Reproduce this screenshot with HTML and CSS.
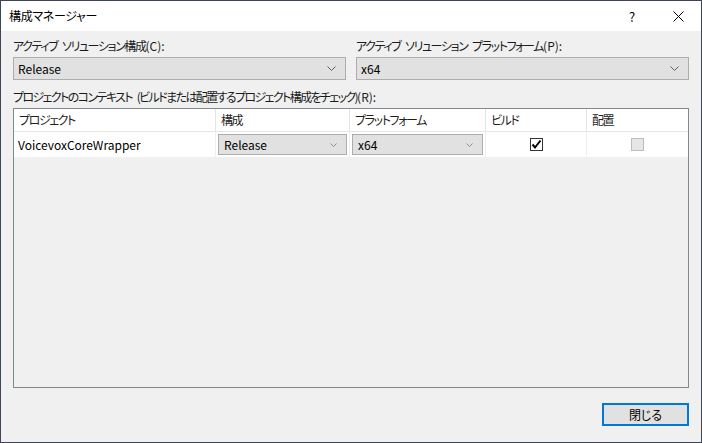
FILE: index.html
```html
<!DOCTYPE html>
<html lang="ja">
<head>
<meta charset="utf-8">
<title>構成マネージャー</title>
<link rel="stylesheet" href="styles.css">
</head>
<body>
<div class="window">
  <div class="titlebar">
    <span class="title">構成マネージャー</span>
    <span class="tb-btns">
      <span class="tb-help">?</span>
      <span class="tb-close"><svg width="11" height="11" viewBox="0 0 11 11"><path d="M0.5 0.5 L10.5 10.5 M10.5 0.5 L0.5 10.5" stroke="#000" stroke-width="1" fill="none"/></svg></span>
    </span>
  </div>
  <div class="content">
    <div class="top-row">
      <div class="field">
        <div class="label"><span class="ja">アクティブ<span class="sp"> </span>ソリューション構成</span>(C):</div>
        <div class="combo"><span>Release</span><svg class="chev" width="9" height="5" viewBox="0 0 9 5"><path d="M0.5 0.5 L4.5 4.5 L8.5 0.5" stroke="#606060" fill="none"/></svg></div>
      </div>
      <div class="field">
        <div class="label"><span class="ja">アクティブ<span class="sp"> </span>ソリューション<span class="sp"> </span>プラットフォーム</span>(P):</div>
        <div class="combo"><span>x64</span><svg class="chev" width="9" height="5" viewBox="0 0 9 5"><path d="M0.5 0.5 L4.5 4.5 L8.5 0.5" stroke="#606060" fill="none"/></svg></div>
      </div>
    </div>
    <div class="label label2"><span class="ja tight">プロジェクトのコンテキスト<span class="sp"> </span>(ビルドまたは配置するプロジェクト構成をチェック)</span>(R):</div>
    <div class="grid">
      <div class="grow head">
        <div class="cell ja">プロジェクト</div>
        <div class="cell ja">構成</div>
        <div class="cell ja">プラットフォーム</div>
        <div class="cell ja">ビルド</div>
        <div class="cell ja">配置</div>
      </div>
      <div class="grow data">
        <div class="cell">VoicevoxCoreWrapper</div>
        <div class="cell cc"><div class="mini"><span>Release</span><svg class="mchev" width="7" height="4" viewBox="0 0 7 4"><path d="M0.5 0.5 L3.5 3.5 L6.5 0.5" stroke="#909090" fill="none"/></svg></div></div>
        <div class="cell cc"><div class="mini"><span>x64</span><svg class="mchev" width="7" height="4" viewBox="0 0 7 4"><path d="M0.5 0.5 L3.5 3.5 L6.5 0.5" stroke="#909090" fill="none"/></svg></div></div>
        <div class="cell center"><span class="chk"><svg width="11" height="11" viewBox="0 0 11 11"><path d="M1.5 5.5 L4 8.5 L9.5 1.5" stroke="#000" stroke-width="2" fill="none"/></svg></span></div>
        <div class="cell center"><span class="chk disabled"></span></div>
      </div>
    </div>
    <div class="footer">
      <div class="btn">閉じる</div>
    </div>
  </div>
</div>
</body>
</html>
```
FILE: styles.css
```css
* { box-sizing: border-box; }
html, body { margin: 0; padding: 0; }
body {
  font-family: "Noto Sans CJK JP", "Noto Sans", sans-serif;
  font-size: 12px;
  font-feature-settings: "palt";
  color: #000;
  background: #f0f0f0;
}
.ja { letter-spacing: -1.4px; }
.ja.tight { letter-spacing: -1.6px; }
.ja .sp { letter-spacing: 2px; }
.window {
  width: 702px;
  height: 443px;
  border: 1px solid #3c4656;
  background: #f0f0f0;
  display: flex;
  flex-direction: column;
}
.titlebar {
  height: 30px;
  background: #fff;
  display: flex;
  align-items: center;
  justify-content: space-between;
  padding-left: 8px;
  flex: none;
}
.title { line-height: 16px; letter-spacing: -0.3px; }
.tb-btns { display: flex; align-items: center; height: 30px; }
.tb-help {
  width: 46px;
  text-align: center;
  font-size: 13px;
}
.tb-close {
  width: 46px;
  height: 30px;
  display: flex;
  align-items: center;
  justify-content: center;
}
.content {
  flex: 1;
  display: flex;
  flex-direction: column;
  padding: 7px 12px 16px 12px;
}
.top-row {
  display: flex;
  gap: 10px;
}
.field { flex: 1; }
.label { line-height: 16px; height: 16px; white-space: nowrap; color: #1a1a1a; }
.combo {
  margin-top: 3px;
  height: 23px;
  border: 1px solid #adadad;
  background: #e1e1e1;
  display: flex;
  align-items: center;
  justify-content: space-between;
  padding: 0 9px 0 4px;
}
.combo span { line-height: 16px; }
.label2 { margin-top: 9px; }
.grid {
  margin-top: 3px;
  height: 280px;
  border: 1px solid #828790;
  background: #f0f0f0;
  display: flex;
  flex-direction: column;
}
.grow {
  display: grid;
  grid-template-columns: 202px 134px 136px 101px 1fr;
}
.head {
  height: 23px;
  background: #fff;
  border-bottom: 1px solid #e5e5e5;
}
.head .cell {
  border-right: 1px solid #e5e5e5;
  padding-left: 5px;
  line-height: 22px;
  color: #1e1e1e;
}
.head .cell:last-child { border-right: none; }
.data {
  height: 25px;
  background: #fff;
}
.data .cell {
  border-right: 1px solid #f0f0f0;
  padding-left: 4px;
  line-height: 25px;
  display: flex;
  align-items: center;
}
.data .cell:last-child { border-right: none; }
.data .cc { padding: 0 2px 0 2px; }
.data .center { justify-content: center; padding: 0; }
.mini {
  width: 100%;
  height: 21px;
  border: 1px solid #adadad;
  background: #e1e1e1;
  display: flex;
  align-items: center;
  justify-content: space-between;
  padding: 0 9px 0 5px;
  line-height: 16px;
}
.chk {
  width: 13px;
  height: 13px;
  border: 1px solid #333;
  background: #fff;
  display: flex;
  align-items: center;
  justify-content: center;
}
.chk.disabled {
  border-color: #bcbcbc;
  background: #e6e6e6;
}
.footer {
  margin-top: auto;
  display: flex;
  justify-content: flex-end;
}
.btn {
  width: 87px;
  height: 23px;
  border: 2px solid #0078d7;
  background: #e1e1e1;
  text-align: center;
  line-height: 19px;
}
```
